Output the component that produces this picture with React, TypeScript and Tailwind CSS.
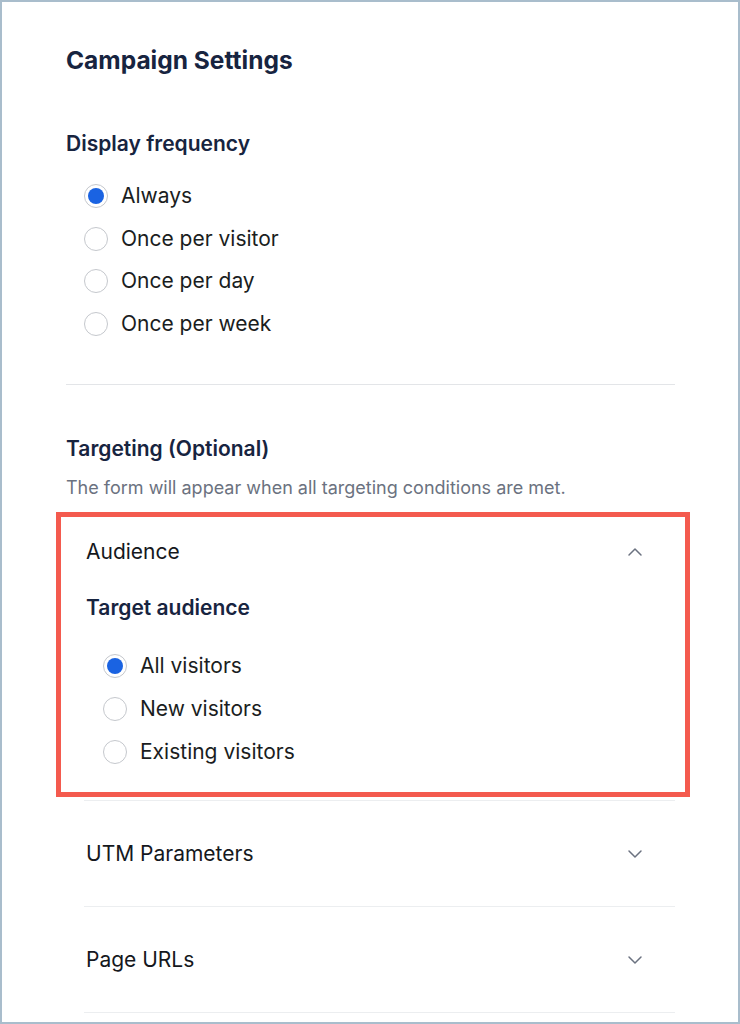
import React from "react";

function Radio({ checked, label, tall }: { checked?: boolean; label: string; tall?: boolean }) {
  return (
    <div className={`flex items-center gap-[13px] ${tall ? "h-[43px]" : "h-[42.5px]"}`}>
      <span className="flex h-[24px] w-[24px] shrink-0 items-center justify-center rounded-full border border-[#c5c8cd] bg-white">
        {checked && <span className="h-[16px] w-[16px] rounded-full bg-[#1a63e2]" />}
      </span>
      <span className="text-[21px] leading-[28px] text-[#1a1d21]">{label}</span>
    </div>
  );
}

function Chevron({ up }: { up?: boolean }) {
  return (
    <svg width="16" height="10" viewBox="0 0 16 10" fill="none" className="mr-[32px]">
      <path
        d={up ? "M2 8l6-6 6 6" : "M2 2l6 6 6-6"}
        stroke="#6b7280"
        strokeWidth="1.5"
        strokeLinecap="round"
        strokeLinejoin="round"
      />
    </svg>
  );
}

export default function App() {
  return (
    <div
      className="h-[1024px] w-[740px] overflow-hidden border-2 border-[#a9bdcc] bg-white"
      style={{ fontFamily: "Inter, 'Noto Sans', sans-serif" }}
    >
      <div className="pl-[64px] pr-[63px]">
        <h1 className="pt-[42px] text-[24.5px] font-bold leading-[32px] text-[#172440]">Campaign Settings</h1>

        <h2 className="mt-[54px] text-[21px] font-semibold leading-[28px] text-[#172440]">Display frequency</h2>
        <div className="ml-[18px] mt-[17px] flex flex-col">
          <Radio checked label="Always" />
          <Radio label="Once per visitor" />
          <Radio label="Once per day" />
          <Radio label="Once per week" />
        </div>

        <div className="mt-[39px] h-px bg-[#e3e5e8]" />

        <h2 className="mt-[50px] text-[21px] font-semibold leading-[28px] text-[#172440]">Targeting (Optional)</h2>
        <p className="mt-[13px] text-[18px] leading-[24px] text-[#6b7280]">
          The form will appear when all targeting conditions are met.
        </p>

        <div className="ml-[18px]">
          <div className="relative border-b border-[#eceef0] pb-[27px] pt-[38px]">
            <div className="pointer-events-none absolute bottom-[3px] left-[-28px] right-[-15px] top-[12px] border-[5px] border-[#f45a4e]" />
            <div className="flex h-[28px] items-center justify-between pl-[2px]">
              <span className="text-[21px] leading-[28px] text-[#15181d]">Audience</span>
              <Chevron up />
            </div>
            <div className="pl-[2px]">
              <h3 className="mt-[28px] text-[21px] font-semibold leading-[28px] text-[#172440]">Target audience</h3>
              <div className="ml-[17px] mt-[22px] flex flex-col">
                <Radio tall checked label="All visitors" />
                <Radio tall label="New visitors" />
                <Radio tall label="Existing visitors" />
              </div>
            </div>
          </div>

          <div className="flex h-[106px] items-center justify-between border-b border-[#eceef0] pl-[2px]">
            <span className="text-[21px] leading-[28px] text-[#15181d]">UTM Parameters</span>
            <Chevron />
          </div>
          <div className="flex h-[106px] items-center justify-between border-b border-[#eceef0] pl-[2px]">
            <span className="text-[21px] leading-[28px] text-[#15181d]">Page URLs</span>
            <Chevron />
          </div>
        </div>
      </div>
    </div>
  );
}
